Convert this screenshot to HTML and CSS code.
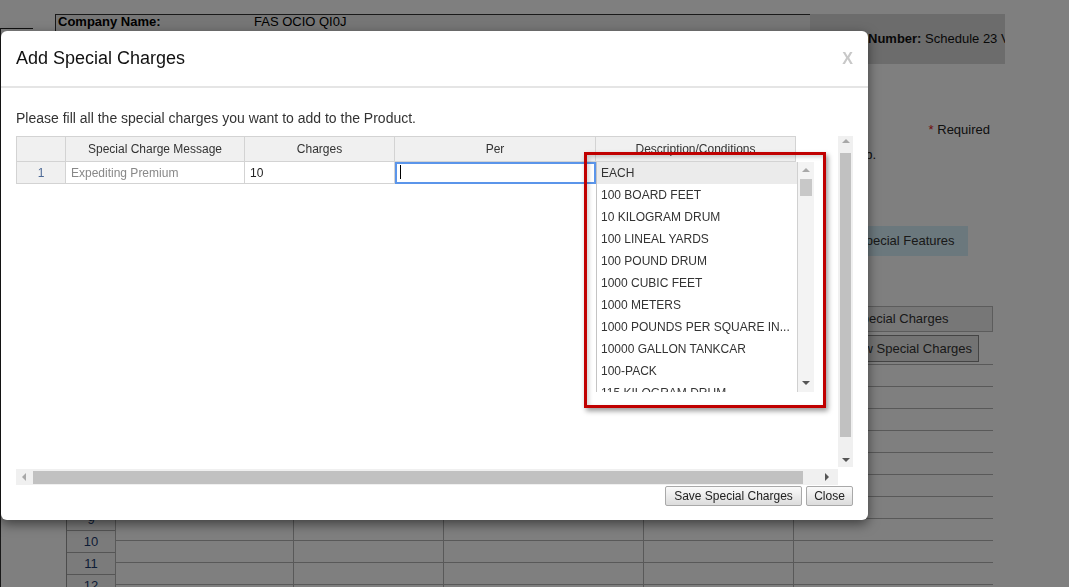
FILE: index.html
```html
<!DOCTYPE html>
<html>
<head>
<meta charset="utf-8">
<title>Add Special Charges</title>
<link rel="stylesheet" href="styles.css">
</head>
<body>
<div class="page">
  <div class="edge"></div>
  <div class="main">
    <div class="hdr">
      <div class="company"><span class="lbl">Company Name:</span><span class="val">FAS OCIO QI0J</span></div>
      <div class="numbox"><b>Number:</b> Schedule 23 VA 1234</div>
    </div>
    <div class="side">
      <div class="req"><span class="star">*</span> Required</div>
      <div class="note">See attached tab.</div>
      <div class="features">Special Features</div>
      <div class="tabbar">Special Charges</div>
      <div class="btnview">View Special Charges</div>
    </div>
    <div class="bgtable">
      <div class="numcol">
        <div class="numcell">2</div><div class="numcell">3</div><div class="numcell">4</div>
        <div class="numcell">5</div><div class="numcell">6</div><div class="numcell">7</div>
        <div class="numcell">8</div><div class="numcell">9</div><div class="numcell">10</div>
        <div class="numcell">11</div><div class="numcell">12</div>
      </div>
      <div class="datacol">
        <div class="drow"><div class="dc c1"></div><div class="dc c2"></div><div class="dc c3"></div><div class="dc c4"></div><div class="dc c5"></div></div>
        <div class="drow"><div class="dc c1"></div><div class="dc c2"></div><div class="dc c3"></div><div class="dc c4"></div><div class="dc c5"></div></div>
        <div class="drow"><div class="dc c1"></div><div class="dc c2"></div><div class="dc c3"></div><div class="dc c4"></div><div class="dc c5"></div></div>
        <div class="drow"><div class="dc c1"></div><div class="dc c2"></div><div class="dc c3"></div><div class="dc c4"></div><div class="dc c5"></div></div>
        <div class="drow"><div class="dc c1"></div><div class="dc c2"></div><div class="dc c3"></div><div class="dc c4"></div><div class="dc c5"></div></div>
        <div class="drow"><div class="dc c1"></div><div class="dc c2"></div><div class="dc c3"></div><div class="dc c4"></div><div class="dc c5"></div></div>
        <div class="drow"><div class="dc c1"></div><div class="dc c2"></div><div class="dc c3"></div><div class="dc c4"></div><div class="dc c5"></div></div>
        <div class="drow"><div class="dc c1"></div><div class="dc c2"></div><div class="dc c3"></div><div class="dc c4"></div><div class="dc c5"></div></div>
        <div class="drow"><div class="dc c1"></div><div class="dc c2"></div><div class="dc c3"></div><div class="dc c4"></div><div class="dc c5"></div></div>
        <div class="drow"><div class="dc c1"></div><div class="dc c2"></div><div class="dc c3"></div><div class="dc c4"></div><div class="dc c5"></div></div>
        <div class="drow"><div class="dc c1"></div><div class="dc c2"></div><div class="dc c3"></div><div class="dc c4"></div><div class="dc c5"></div></div>
      </div>
    </div>
  </div>
</div>

<div class="overlay"></div>

<div class="modal">
  <div class="mhead">
    <div class="mtitle">Add Special Charges</div>
    <div class="mclose">X</div>
  </div>
  <div class="mbody">
    <div class="intro">Please fill all the special charges you want to add to the Product.</div>
    <div class="gridwrap">
      <div class="viewport">
        <div class="table">
          <div class="th first"></div>
          <div class="th">Special Charge Message</div>
          <div class="th">Charges</div>
          <div class="th">Per</div>
          <div class="th">Description/Conditions</div>
          <div class="td num first">1</div>
          <div class="td msg">Expediting Premium</div>
          <div class="td chg">10</div>
          <div class="td per"><span class="caret"></span></div>
          <div class="td"></div>
        </div>
      </div>
      <div class="vscroll">
        <span class="tri up light"></span>
        <span class="vthumb"></span>
        <span class="tri down dark"></span>
      </div>
      <div class="hscroll">
        <span class="tri left light"></span>
        <span class="hthumb"></span>
        <span class="tri right dark"></span>
      </div>
      <div class="corner"></div>
    </div>
    <div class="footer">
      <button class="btn save">Save Special Charges</button>
      <button class="btn close">Close</button>
    </div>
  </div>

  <div class="dropdown">
    <div class="dlist">
      <div class="ditem sel">EACH</div>
      <div class="ditem">100 BOARD FEET</div>
      <div class="ditem">10 KILOGRAM DRUM</div>
      <div class="ditem">100 LINEAL YARDS</div>
      <div class="ditem">100 POUND DRUM</div>
      <div class="ditem">1000 CUBIC FEET</div>
      <div class="ditem">1000 METERS</div>
      <div class="ditem">1000 POUNDS PER SQUARE IN...</div>
      <div class="ditem">10000 GALLON TANKCAR</div>
      <div class="ditem">100-PACK</div>
      <div class="ditem">115 KILOGRAM DRUM</div>
    </div>
    <div class="dtrack">
      <span class="tri up light"></span>
      <span class="dthumb"></span>
      <span class="tri down dark"></span>
    </div>
  </div>
</div>

<div class="annot"></div>
</body>
</html>
```

FILE: styles.css
```css
* { box-sizing: border-box; margin: 0; padding: 0; }
html, body { width: 1069px; height: 587px; overflow: hidden; }
body {
  background: #fff;
  font-family: "Liberation Sans", Arial, sans-serif;
  font-size: 13px;
  color: #333;
  position: relative;
}

/* ---------- background page ---------- */
.page { display: flex; height: 587px; }
.edge {
  width: 33px; flex: none;
  margin-top: 28px;
  border-top: 1px solid #222;
  border-left: 1px solid #333;
}
.main { width: 950px; flex: none; margin-left: 22px; padding-top: 14px; }
.hdr { display: flex; height: 50px; }
.company {
  width: 755px;
  border-top: 1px solid #333;
  border-left: 1px solid #333;
  background: #ececec;
  display: flex;
  padding-left: 2px;
  line-height: 14px;
  color: #000;
}
.company .lbl { font-weight: bold; width: 196px; }
.numbox {
  width: 195px;
  background: #d8d8d8;
  line-height: 50px;
  padding-left: 58px;
  white-space: nowrap;
  overflow: hidden;
  color: #111;
}
.side { width: 938px; }
.req { margin-top: 58px; line-height: 16px; text-align: right; padding-right: 3px; color: #222; }
.req .star { color: #e02020; }
.note { margin-top: 9px; line-height: 16px; text-align: right; padding-right: 117px; color: #222; }
.features {
  margin-top: 63px; margin-left: 705px; width: 208px; height: 30px;
  line-height: 30px; background: #d6f0fa; padding-left: 97px; color: #333;
}
.tabbar {
  margin-top: 50px; margin-left: 705px; width: 233px; height: 26px;
  border: 1px solid #b8b8b8; background: #efefef; line-height: 24px;
  padding-left: 92px; color: #333;
}
.btnview {
  margin-top: 3px; margin-left: 704px; width: 220px; height: 27px;
  border: 1px solid #888; background: #e6e6e6; line-height: 25px;
  text-align: right; padding-right: 6px; color: #333;
}
.bgtable { margin-top: 2px; margin-left: 11px; display: flex; }
.numcol { width: 49px; flex: none; margin-top: -10px; border-left: 1px solid #999; }
.numcell {
  height: 22px; border-top: 1px solid #aaa; background: #f6f6f6;
  text-align: center; line-height: 21px; color: #1d3b6e;
}
.datacol { width: 878px; flex: none; }
.drow { display: flex; height: 22px; border-top: 1px solid #b2b2b2; }
.dc { height: 100%; flex: none; border-left: 1px solid #b2b2b2; }
.c1 { width: 178px; }
.c2 { width: 150px; }
.c3 { width: 200px; }
.c4 { width: 150px; }
.c5 { width: 200px; }

/* ---------- overlay + modal ---------- */
.overlay { position: fixed; inset: 0; background: rgba(0, 0, 0, 0.5); }
.modal {
  position: absolute; left: 1px; top: 31px; width: 867px; height: 489px;
  background: #fff; border-radius: 6px;
  box-shadow: 0 4px 12px rgba(0, 0, 0, 0.5);
  display: flex; flex-direction: column;
}
.mhead {
  height: 57px; flex: none;
  border-bottom: 2px solid #e5e5e5;
  display: flex; align-items: center; justify-content: space-between;
  padding: 0 15px;
}
.mtitle { font-size: 18px; color: #111; }
.mclose { font-size: 16px; font-weight: bold; color: #c8c8c8; }
.mbody { padding: 0 15px; flex: 1; display: flex; flex-direction: column; }
.intro { margin-top: 20px; font-size: 14px; line-height: 20px; color: #333; }
.gridwrap {
  margin-top: 8px;
  display: grid;
  grid-template-columns: 822px 15px;
  grid-template-rows: 333px 16px;
  width: 837px;
}
.viewport { overflow: hidden; }
.table {
  display: grid;
  grid-template-columns: 50px 179px 150px 201px 200px;
  width: 780px;
  font-size: 12px;
}
.th {
  height: 26px; background: #f0f0f0;
  border-top: 1px solid #d3d3d3; border-right: 1px solid #d3d3d3; border-bottom: 1px solid #d3d3d3;
  text-align: center; line-height: 24px; color: #333;
}
.td {
  height: 22px; border-right: 1px solid #d3d3d3; border-bottom: 1px solid #d3d3d3;
  line-height: 21px; padding: 1px 0 0 5px; white-space: nowrap;
}
.first { border-left: 1px solid #d3d3d3; }
.td.num { background: #f0f0f0; text-align: center; padding-left: 0; color: #4e6a96; }
.td.msg { color: #888; }
.td.chg { color: #222; }
.td.per { outline: 2px solid #5b95ea; outline-offset: -2px; padding-top: 0; }
.caret { display: inline-block; width: 1px; height: 14px; background: #000; vertical-align: -3px; }

.tri { display: block; width: 0; height: 0; flex: none; }
.tri.up { border-left: 4px solid transparent; border-right: 4px solid transparent; border-bottom: 4px solid #a8a8a8; }
.tri.down { border-left: 4px solid transparent; border-right: 4px solid transparent; border-top: 4px solid #555; }
.tri.left { border-top: 4px solid transparent; border-bottom: 4px solid transparent; border-right: 4px solid #a8a8a8; }
.tri.right { border-top: 4px solid transparent; border-bottom: 4px solid transparent; border-left: 4px solid #555; }

.vscroll {
  background: #f0f0f0; height: 331px;
  display: flex; flex-direction: column; align-items: center;
  padding: 3px 0 5px;
}
.vthumb { width: 11px; height: 284px; background: #c1c1c1; margin-top: 10px; margin-bottom: auto; }
.hscroll {
  background: #f0f0f0;
  display: flex; align-items: center;
  padding: 0 9px 0 6px;
}
.hthumb { width: 770px; height: 13px; background: #c1c1c1; margin-left: 7px; margin-right: auto; }
.corner { background: #fff; }

.footer { margin-top: 1px; display: flex; justify-content: flex-end; gap: 4px; }
.btn {
  height: 20px; font-family: inherit; font-size: 12px; color: #222;
  border: 1px solid #a9a9a9; border-radius: 2px;
  background: linear-gradient(#fafafa, #dcdcdc);
}
.btn.save { width: 137px; }
.btn.close { width: 47px; }

/* ---------- dropdown list ---------- */
.dropdown {
  position: absolute; left: 595px; top: 131px; width: 218px; height: 230px;
  background: #fff; border-left: 1px solid #c4c4c4; display: flex;
}
.dlist { width: 201px; border-right: 1px solid #d0d0d0; overflow: hidden; }
.ditem {
  height: 22px; line-height: 22px; padding-left: 4px;
  font-size: 12px; color: #333; white-space: nowrap; overflow: hidden;
}
.ditem.sel { background: #ebebeb; }
.dtrack {
  width: 16px; background: #f3f3f3;
  display: flex; flex-direction: column; align-items: center;
  padding: 6px 0 7px;
}
.dthumb { width: 12px; height: 17px; background: #c8c8c8; margin-top: 7px; margin-bottom: auto; }

/* ---------- annotation ---------- */
.annot {
  position: absolute; left: 584px; top: 152px; width: 242px; height: 256px;
  border: 3px solid #c00000;
  box-shadow: 2px 3px 5px rgba(0, 0, 0, 0.4), inset 2px 2px 4px rgba(0, 0, 0, 0.18);
}
```
